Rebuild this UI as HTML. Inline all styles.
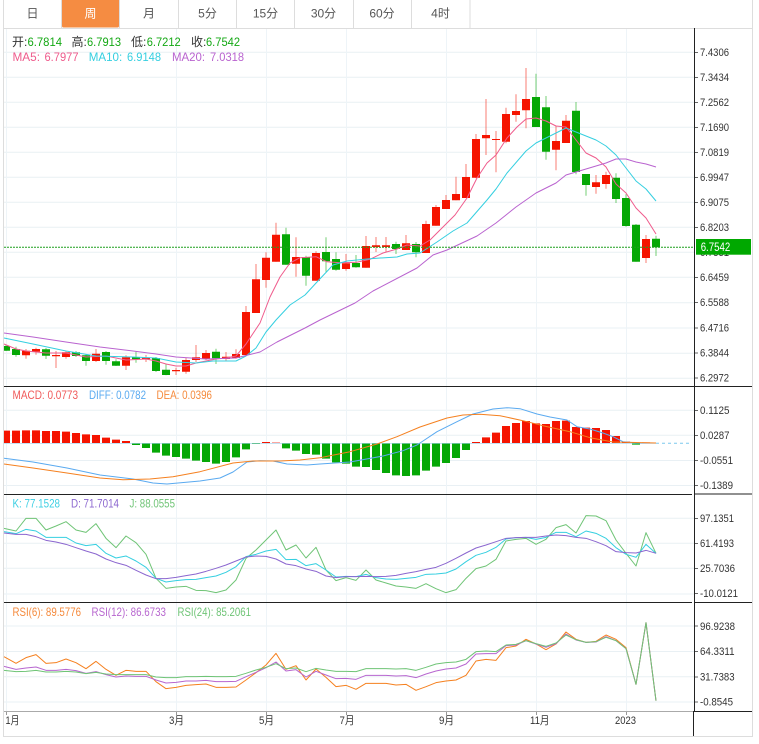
<!DOCTYPE html>
<html lang="zh">
<head>
<meta charset="utf-8">
<title>K线图</title>
<style>
html,body{margin:0;padding:0;background:#fff;width:759px;height:744px;overflow:hidden}
svg{display:block}
text{font-family:"Liberation Sans","Noto Sans CJK SC",sans-serif}
.ax text{font-size:10.6px;fill:#333}
.tb text{font-size:12px;fill:#555;text-anchor:middle}
.l text{font-size:12px}
polyline{fill:none;stroke-width:1;vector-effect:non-scaling-stroke;stroke-linejoin:round}
</style>
</head>
<body>
<svg width="759" height="744" viewBox="0 0 759 744" xmlns="http://www.w3.org/2000/svg">
<rect width="759" height="744" fill="#fff"/>
<!-- grid -->
<path fill="none" stroke="#e9f0f4" stroke-width="1" d="M4 52.3H694M4 77.3H694M4 102.3H694M4 127.3H694M4 152.3H694M4 177.3H694M4 202.3H694M4 227.3H694M4 252.3H694M4 277.3H694M4 302.7H694M4 328H694M4 353.2H694M4 378.3H694M4 410.3H694M4 435.3H694M4 460.5H694M4 485.5H694M4 518.3H694M4 543.3H694M4 568.3H694M4 594H694M4 626H694M4 651.5H694M4 676.7H694M4 702H694"/>
<path fill="none" stroke="#eef4f8" stroke-width="1" d="M6.5 28V711M176.5 28V711M266.5 28V711M346.5 28V711M446.5 28V711M536.5 28V711M626.5 28V711"/>
<!-- frame -->
<path fill="none" stroke="#ddd" stroke-width="1" d="M3.5 0V736.5H752.5V0"/>
<path fill="none" stroke="#ddd" stroke-width="1" d="M3.5 28.5H752.5M61.5 0V28M119.5 0V28M178.5 0V28M236.5 0V28M294.5 0V28M353.5 0V28M411.5 0V28M470 0V28"/>
<!-- tabs -->
<path d="M62 0H119V26a1.5 1.5 0 0 1-1.5 1.5H63.5A1.5 1.5 0 0 1 62 26Z" fill="#f58c42"/>
<g class="tb">
<text x="32.500" y="17.500">日</text>
<text x="90.500" y="17.500" style="fill:#fff">周</text>
<text x="149" y="17.500">月</text>
<text x="207.500" y="17.500">5分</text>
<text x="265.500" y="17.500">15分</text>
<text x="323.500" y="17.500">30分</text>
<text x="382" y="17.500">60分</text>
<text x="440.500" y="17.500">4时</text>
</g>
<!-- wicks -->
<g fill="none" stroke-width="1">
<path stroke="#f51400" stroke-opacity=".55" d="M26 349V358.700M36 347.700V354.700M56 351V368M66 351V358.700M96 349V362M126 355.300V370M146 355V362M176 367.700V375M186 358V373.700M196 345V362M206 350V360M226 352V360.700M236 349.300V358.700M246 306V355M256 264V313M266 252.300V287.700M276 222.700V261.700M296 237.300V276.700M316 251.300V280.700M346 254V270.700M366 236V267.700M376 237V252M386 237V252M406 235V250M426 220.700V253M436 205V225.700M446 195V209M456 176.700V200.300M466 164V198M476 134V178.300M486 99V155M496 131V172.300M506 107.700V143.300M516 94.300V121.700M526 68V128.300M556 125.700V170.300M566 115V143M596 175V193.700M606 171.700V188.700M646 235V263"/>
<path stroke="#06a806" stroke-opacity=".55" d="M6 344.500V351M16 346.700V356.700M46 348V359M76 351V357M86 354.300V365.700M106 351V364.700M116 359.300V366M136 351.700V362.700M156 357V372M166 363.700V375.300M216 348.700V364M286 227.700V264.700M306 255.700V285.700M326 237.300V271.700M336 252.300V270.700M356 255V267.700M396 241.700V254M416 242V257.300M536 73.700V127M546 96V159.700M576 102V174.300M586 174V195.700M616 173.300V203M626 194.300V226.700M636 224V261.700M656 235.700V256"/>
</g>
<!-- red bodies -->
<path fill="#f51400" d="M22 350.700H30V355.300H22ZM32 349H40V351.700H32ZM52 355H60V356.300H52ZM62 352.300H70V357H62ZM92 353.700H100V361H92ZM122 357.300H130V365.700H122ZM142 357.700H150V359.300H142ZM172 370H180V371.300H172ZM182 360H190V371.700H182ZM192 357.300H200V360H192ZM202 353H210V359H202ZM222 356.700H230V359H222ZM232 354H240V358H232ZM242 312H250V355H242ZM252 279.300H260V313H252ZM262 257.700H270V280H262ZM272 234.700H280V261.700H272ZM292 257H300V263.700H292ZM312 253H320V280.700H312ZM342 263.300H350V269H342ZM362 246H370V267.700H362ZM372 245.300H380V247H372ZM382 245.300H390V247H382ZM402 243.300H410V250H402ZM422 224H430V253H422ZM432 207H440V225.700H432ZM442 200H450V209H442ZM452 194H460V200.300H452ZM462 177H470V198H462ZM472 139H480V177.700H472ZM482 135H490V138.300H482ZM492 139H500V140H492ZM502 114H510V141.700H502ZM512 111H520V115H512ZM522 99H530V110.300H522ZM552 141H560V149.700H552ZM562 120.700H570V143H562ZM592 182.300H600V187H592ZM602 175H610V184H602ZM642 239H650V258H642Z"/>
<!-- green bodies -->
<path fill="#06a806" d="M4 346H10V350.700H4ZM12 349H20V355H12ZM42 349.300H50V355.700H42ZM72 352.300H80V356H72ZM82 355.300H90V361H82ZM102 352H110V361H102ZM112 361.300H120V365.700H112ZM132 357.300H140V359.300H132ZM152 358H160V371H152ZM162 369.700H170V375H162ZM212 351.700H220V358.300H212ZM282 234.300H290V264.700H282ZM302 257H310V275.700H302ZM322 252H330V261.300H322ZM332 259H340V269.700H332ZM352 263H360V267.300H352ZM392 244H400V249H392ZM412 244H420V252.300H412ZM532 97H540V127H532ZM542 107.300H550V151.700H542ZM572 110.700H580V172H572ZM582 174H590V185H582ZM612 177.700H620V199H612ZM622 198H630V226H622ZM632 224.700H640V261.700H632ZM652 238.700H660V247.300H652Z"/>
<!-- MA lines -->
<polyline stroke="#ef5b8c" points="4,344 16,349 26,351 46,353 66,353 86,357 106,356 126,360 146,359 156,361 166,364 176,366 186,366 196,363 206,361 216,359 226,358 236,356 246,344 260,323 270,297 280,277 290,263 300,257.700 316,256.700 326.700,261.700 340,262.700 356.700,262.300 370,259.300 383,253 397,249 407,245 420,246 430,240 440,230 455,215 467,198 477,178 487,163 496,155 507,138 517,127 526,119 536,118 546,121 556,126 566,127 576,140 586,153 596,158 606,167 616,184 626,193 636,208 646,218 656,234"/>
<polyline stroke="#35cfe0" points="4,338 33,344 66,351 96,356 133,357 156,358 176,362 196,363 213,361 236,361 246,356 256,348 266,332 276,320 290,305 305,295 317,282 333,265 347,261 367,259 380,258 397,257 407,254 420,253 437,242 453,231 467,223 487,200 496,189 507,173 526,151 536,143 546,138 566,128 576,132 586,136 596,140 606,146 616,155 626,168 636,181 646,189 656,201"/>
<polyline stroke="#b963cf" points="4,333 33,337 66,342 100,347 133,351 156,354 176,357 206,359 236,358 260,352 277,342 305,328 320,320 355,303 373,291 417,268 433,255 447,250 477,236 496,223 516,207 536,193 556,183 566,175 586,169 606,163 616,159 626,159 636,162 646,164 656,167"/>
<!-- price line -->
<line x1="4" y1="247.300" x2="694" y2="247.300" stroke="#1f9f1f" stroke-width="1" stroke-dasharray="2 1"/>
<!-- MACD -->
<g transform="translate(0,385) scale(1,.33333)">
<path fill="#f51400" d="M4 137H10V175H4ZM12 137H20V175H12ZM22 136H30V175H22ZM32 136H40V175H32ZM42 138H50V175H42ZM52 138H60V175H52ZM62 140H70V175H62ZM72 144H80V175H72ZM82 148H90V175H82ZM92 150H100V175H92ZM102 158H110V175H102ZM112 164H120V175H112ZM122 168H130V175H122ZM262 171H270V175H262ZM272 173H280V175H272ZM472 171H480V175H472ZM482 157H490V175H482ZM492 143H500V175H492ZM502 123H510V175H502ZM512 114H520V175H512ZM522 108H530V175H522ZM532 115H540V175H532ZM542 117H550V175H542ZM552 108H560V175H552ZM562 107H570V175H562ZM572 126H580V175H572ZM582 128H590V175H582ZM592 129H600V175H592ZM602 135H610V175H602ZM612 153H620V175H612ZM622 170H630V175H622ZM642 172H650V175H642Z"/>
<path fill="#06a806" d="M132 175H140V180H132ZM142 175H150V189H142ZM152 175H160V203H152ZM162 175H170V212H162ZM172 175H180V216H172ZM182 175H190V221H182ZM192 175H200V227H192ZM202 175H210V231H202ZM212 175H220V236H212ZM222 175H230V231H222ZM232 175H240V217H232ZM242 175H250V193H242ZM252 175H260V177H252ZM282 175H290V190H282ZM292 175H300V197H292ZM302 175H310V207H302ZM312 175H320V209H312ZM322 175H330V221H322ZM332 175H340V232H332ZM342 175H350V236H342ZM352 175H360V245H352ZM362 175H370V246H362ZM372 175H380V255H372ZM382 175H390V264H382ZM392 175H400V271H392ZM402 175H410V273H402ZM412 175H420V271H412ZM422 175H430V257H422ZM432 175H440V245H432ZM442 175H450V234H442ZM452 175H460V219H452ZM462 175H470V195H462ZM632 175H640V179H632Z"/>
</g>
<line x1="4" y1="443.300" x2="656" y2="443.300" stroke="#9fd0ee" stroke-width=".7"/>
<line x1="656" y1="443.300" x2="692" y2="443.300" stroke="#7cc8ee" stroke-width="1" stroke-dasharray="3 3"/>
<polyline stroke="#5aaaf0" points="4,458.300 33,462 67,468 100,475 133,479 153,483 167,484 200,481 220,478 233,472 247,462 260,460.700 273,461 287,464 307,465 320,464 350,462 383,456 403,450.700 417,445 437,431.700 457,421.700 473,414 493,409 507,407.700 520,408.700 537,414 550,417 567,420 577,426.700 590,429 603,433 613,436.700 623,441.700 637,443 656,443"/>
<polyline stroke="#f5801f" points="4,464 33,468 67,473 100,478 123,479.700 150,479 173,476.700 200,471.700 233,463 253,461 280,461 300,460 320,457.700 350,451.700 377,444 397,436.700 420,427 447,418 463,415 480,414.300 500,415.700 523,420.700 543,425.700 570,431.700 590,437.700 613,442 656,443"/>
<!-- KDJ -->
<g transform="translate(0,495) scale(1,.33333)">
<polyline stroke="#6fc476" points="4,100 16,108 26,70 36,70 46,105 56,93 66,80 76,105 86,112 96,86 106,130 116,158 126,123 136,143 146,178 156,250 166,280 176,276 186,274 196,286 206,287 216,293 226,285 236,255 246,190 256,165 266,135 276,105 286,165 296,150 306,189 316,157 326,225 336,257 346,248 356,256 366,225 376,255 386,264 396,273 406,276 416,280 426,266 436,281 446,293 456,284 466,250 476,221 486,213 496,193 506,138 516,133 526,130 536,148 546,133 556,98 566,89 576,114 586,62 596,63 606,77 616,135 626,175 636,213 646,113 656,175"/>
<polyline stroke="#35cfe0" points="4,110 16,116 26,103 36,108 46,127 56,127 66,127 76,144 86,152 96,148 106,175 116,189 126,183 136,198 146,217 156,250 166,261 176,257 186,254 196,253 206,248 216,243 226,232 236,215 246,185 256,178 266,168 276,163 286,194 296,193 306,212 316,206 326,225 336,246 346,244 356,245 366,238 376,248 386,252 396,253 406,250 416,247 426,238 436,237 446,234 456,222 466,200 476,181 486,172 496,157 506,132 516,128 526,127 536,133 546,127 556,112 566,112 576,125 586,108 596,115 606,130 616,158 626,178 636,187 646,148 656,175"/>
<polyline stroke="#8b66cf" points="4,114 16,118 26,118 36,125 46,136 56,141 66,148 76,158 86,168 96,177 106,192 116,203 126,211 136,226 146,240 156,251 166,251 176,247 186,242 196,237 206,229 216,220 226,210 236,198 246,186 256,183 266,184 276,192 286,207 296,212 306,222 316,229 326,243 336,248 346,245 356,245 366,244 376,245 386,244 396,241 406,235 416,230 426,223 436,217 446,205 456,190 466,174 476,159 486,150 496,140 506,130 516,128 526,127 536,127 546,123 556,120 566,122 576,127 586,130 596,140 606,152 616,170 626,173 636,174 646,166 656,175"/>
</g>
<!-- RSI -->
<g transform="translate(0,600) scale(1,.33333)">
<polyline stroke="#f5801f" points="4,170 16,190 26,173 36,164 46,190 56,188 66,177 76,188 86,206 96,184 106,208 116,226 126,211 136,214 146,214 156,245 166,266 176,262 186,256 196,254 206,252 216,262 226,262 236,261 246,240 256,218 266,195 276,160 286,208 296,197 306,240 316,207 326,232 336,260 346,256 356,268 366,250 376,250 386,250 396,255 406,253 416,271 426,260 436,248 446,243 456,240 466,226 476,183 486,178 496,181 506,143 516,138 526,118 536,132 546,149 556,132 566,96 576,118 586,127 596,124 606,105 616,118 626,143 636,253 646,68 656,302"/>
<polyline stroke="#b766cf" points="4,199 16,208 26,204 36,201 46,211 56,211 66,208 76,212 86,220 96,215 106,224 116,231 126,228 136,229 146,229 156,240 166,249 176,247 186,243 196,243 206,241 216,245 226,245 236,244 246,230 256,217 266,203 276,186 286,213 296,209 306,231 316,214 326,225 336,236 346,235 356,238 366,226 376,226 386,226 396,228 406,227 416,233 426,222 436,213 446,207 456,204 466,192 476,162 486,161 496,161 506,137 516,135 526,122 536,132 546,142 556,131 566,102 576,120 586,127 596,126 606,110 616,122 626,146 636,253 646,68 656,302"/>
<polyline stroke="#6fc476" points="4,211 16,215 26,214 36,211 46,216 56,216 66,214 76,216 86,221 96,217 106,222 116,224 126,224 136,224 146,224 156,231 166,233 176,233 186,230 196,230 206,229 216,230 226,230 236,229 246,220 256,210 266,202 276,191 286,206 296,204 306,215 316,205 326,210 336,214 346,214 356,215 366,206 376,206 386,206 396,207 406,206 416,211 426,202 436,192 446,188 456,186 466,178 476,155 486,153 496,155 506,135 516,133 526,122 536,131 546,139 556,129 566,105 576,119 586,127 596,125 606,112 616,122 626,146 636,253 646,68 656,302"/>
</g>
<!-- separators -->
<path fill="none" stroke="#222" stroke-width="1" d="M4 386.500H752M4 494.500H692M694 494H752M4 602.500H692M694 602.500H752M694.500 28V711M693.500 711.500H752M693.500 711V736"/>
<line x1="4" y1="711.500" x2="693" y2="711.500" stroke="#aaa" stroke-width="1"/>
<path fill="none" stroke="#999" stroke-width="1" d="M6.500 712V715M176.500 712V715M266.500 712V715M346.500 712V715M446.500 712V715M536.500 712V715M626.500 712V715"/>
<!-- axis ticks -->
<path fill="none" stroke="#666" stroke-width="1" d="M695 52.500H698M695 77.500H698M695 102.500H698M695 127.500H698M695 152.500H698M695 177.500H698M695 202.500H698M695 227.500H698M695 277.500H698M695 302.500H698M695 328H698M695 353H698M695 378H698M695 410.500H698M695 435.500H698M695 460.500H698M695 485.500H698M695 518.500H698M695 543.500H698M695 568.500H698M695 593.500H698M695 626H698M695 651.500H698M695 677H698M695 702H698"/>
<g class="ax">
<text x="700" y="56" textLength="29" lengthAdjust="spacingAndGlyphs">7.4306</text>
<text x="700" y="81" textLength="29" lengthAdjust="spacingAndGlyphs">7.3434</text>
<text x="700" y="106" textLength="29" lengthAdjust="spacingAndGlyphs">7.2562</text>
<text x="700" y="131" textLength="29" lengthAdjust="spacingAndGlyphs">7.1690</text>
<text x="700" y="156" textLength="29" lengthAdjust="spacingAndGlyphs">7.0819</text>
<text x="700" y="181" textLength="29" lengthAdjust="spacingAndGlyphs">6.9947</text>
<text x="700" y="206" textLength="29" lengthAdjust="spacingAndGlyphs">6.9075</text>
<text x="700" y="231" textLength="29" lengthAdjust="spacingAndGlyphs">6.8203</text>
<text x="700" y="256" textLength="29" lengthAdjust="spacingAndGlyphs">6.7331</text>
<text x="700" y="281" textLength="29" lengthAdjust="spacingAndGlyphs">6.6459</text>
<text x="700" y="306" textLength="29" lengthAdjust="spacingAndGlyphs">6.5588</text>
<text x="700" y="331.500" textLength="29" lengthAdjust="spacingAndGlyphs">6.4716</text>
<text x="700" y="356.500" textLength="29" lengthAdjust="spacingAndGlyphs">6.3844</text>
<text x="700" y="381.500" textLength="29" lengthAdjust="spacingAndGlyphs">6.2972</text>
<text x="700" y="414" textLength="29.500" lengthAdjust="spacingAndGlyphs">0.1125</text>
<text x="700" y="439" textLength="29.500" lengthAdjust="spacingAndGlyphs">0.0287</text>
<text x="700" y="464" textLength="33" lengthAdjust="spacingAndGlyphs">-0.0551</text>
<text x="700" y="489" textLength="33" lengthAdjust="spacingAndGlyphs">-0.1389</text>
<text x="700" y="522" textLength="34" lengthAdjust="spacingAndGlyphs">97.1351</text>
<text x="700" y="547" textLength="34" lengthAdjust="spacingAndGlyphs">61.4193</text>
<text x="700" y="572" textLength="35" lengthAdjust="spacingAndGlyphs">25.7036</text>
<text x="700" y="597" textLength="38" lengthAdjust="spacingAndGlyphs">-10.0121</text>
<text x="700" y="630" textLength="35" lengthAdjust="spacingAndGlyphs">96.9238</text>
<text x="700" y="655" textLength="34.500" lengthAdjust="spacingAndGlyphs">64.3311</text>
<text x="700" y="680.500" textLength="34.500" lengthAdjust="spacingAndGlyphs">31.7383</text>
<text x="700" y="705.500" textLength="33" lengthAdjust="spacingAndGlyphs">-0.8545</text>
<text x="5.500" y="724" textLength="14" lengthAdjust="spacingAndGlyphs">1月</text>
<text x="169" y="724" textLength="15" lengthAdjust="spacingAndGlyphs">3月</text>
<text x="259" y="724" textLength="15" lengthAdjust="spacingAndGlyphs">5月</text>
<text x="339.500" y="724" textLength="15" lengthAdjust="spacingAndGlyphs">7月</text>
<text x="439" y="724" textLength="15" lengthAdjust="spacingAndGlyphs">9月</text>
<text x="530" y="724" textLength="19.500" lengthAdjust="spacingAndGlyphs">11月</text>
<text x="615" y="724" textLength="21" lengthAdjust="spacingAndGlyphs">2023</text>
</g>
<!-- price tag -->
<rect x="696" y="239" width="55" height="15.700" fill="#00a800"/>
<text x="700.700" y="251" font-size="11.500" fill="#fff" textLength="29.500" lengthAdjust="spacingAndGlyphs">6.7542</text>
<!-- header labels -->
<g class="l">
<text x="12" y="46" fill="#333">开:</text><text x="27.500" y="46" fill="#14a814" textLength="34.500" lengthAdjust="spacingAndGlyphs">6.7814</text>
<text x="71.500" y="46" fill="#333">高:</text><text x="87" y="46" fill="#14a814" textLength="34" lengthAdjust="spacingAndGlyphs">6.7913</text>
<text x="131" y="46" fill="#333">低:</text><text x="146.700" y="46" fill="#14a814" textLength="34" lengthAdjust="spacingAndGlyphs">6.7212</text>
<text x="191" y="46" fill="#333">收:</text><text x="206" y="46" fill="#14a814" textLength="34" lengthAdjust="spacingAndGlyphs">6.7542</text>
<text x="12.500" y="61" fill="#ef5b8c" textLength="27.500" lengthAdjust="spacingAndGlyphs">MA5:</text><text x="44.500" y="61" fill="#ef5b8c" textLength="34" lengthAdjust="spacingAndGlyphs">6.7977</text>
<text x="88.700" y="61" fill="#35cfe0" textLength="33.500" lengthAdjust="spacingAndGlyphs">MA10:</text><text x="127" y="61" fill="#35cfe0" textLength="34" lengthAdjust="spacingAndGlyphs">6.9148</text>
<text x="172" y="61" fill="#b963cf" textLength="33" lengthAdjust="spacingAndGlyphs">MA20:</text><text x="210" y="61" fill="#b963cf" textLength="34" lengthAdjust="spacingAndGlyphs">7.0318</text>
<text x="12.500" y="399" fill="#f05a5a" textLength="65.500" lengthAdjust="spacingAndGlyphs">MACD: 0.0773</text>
<text x="89" y="399" fill="#5aaaf0" textLength="57" lengthAdjust="spacingAndGlyphs">DIFF: 0.0782</text>
<text x="156.500" y="399" fill="#f58a3c" textLength="55.500" lengthAdjust="spacingAndGlyphs">DEA: 0.0396</text>
<text x="12.500" y="507.500" fill="#3dcfe3" textLength="47.500" lengthAdjust="spacingAndGlyphs">K: 77.1528</text>
<text x="71" y="507.500" fill="#8b66cf" textLength="48" lengthAdjust="spacingAndGlyphs">D: 71.7014</text>
<text x="129.500" y="507.500" fill="#6fc476" textLength="45.500" lengthAdjust="spacingAndGlyphs">J: 88.0555</text>
<text x="12.500" y="616" fill="#f58a3c" textLength="68.500" lengthAdjust="spacingAndGlyphs">RSI(6): 89.5776</text>
<text x="91.500" y="616" fill="#b766cf" textLength="74.500" lengthAdjust="spacingAndGlyphs">RSI(12): 86.6733</text>
<text x="177.500" y="616" fill="#6fc476" textLength="73.500" lengthAdjust="spacingAndGlyphs">RSI(24): 85.2061</text>
</g>
</svg>
</body>
</html>
